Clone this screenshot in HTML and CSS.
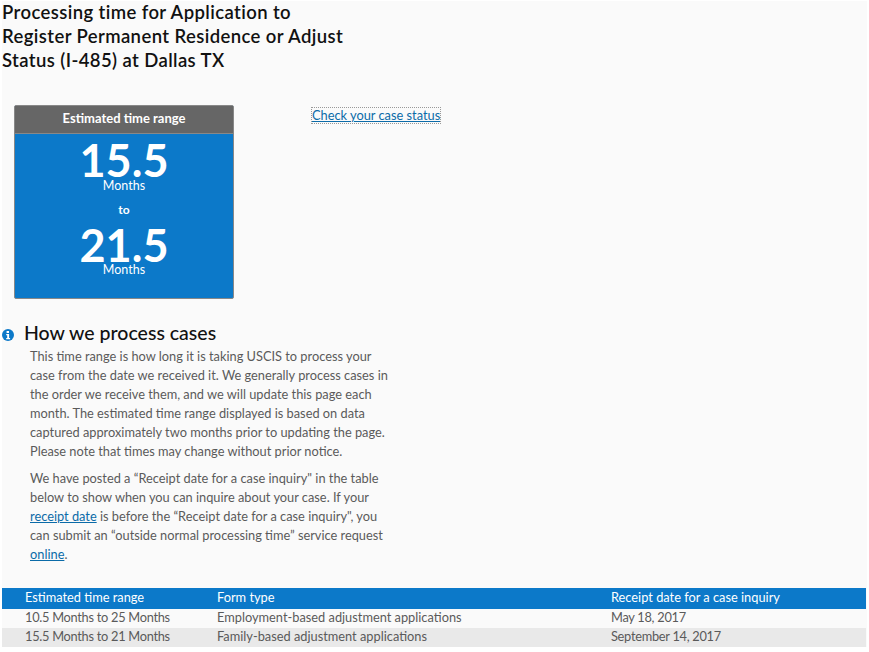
FILE: index.html
```html
<!DOCTYPE html>
<html lang="en">
<head>
    <meta charset="UTF-8">
    <title>Processing time</title>
    <link rel="stylesheet" href="styles.css">
</head>
<body>
    <div class="container">
        <h1>Processing time for Application to<br>Register Permanent Residence or Adjust<br>Status (I-485) at Dallas TX</h1>

        <!-- Time range box and status link -->
        <div class="summary">
            <div class="range-box">
                <div class="range-title">Estimated time range</div>
                <div class="range-body">
                    <div class="range-num">15.5</div>
                    <div class="range-unit">Months</div>
                    <div class="range-to">to</div>
                    <div class="range-num">21.5</div>
                    <div class="range-unit">Months</div>
                </div>
            </div>
            <a class="status-link" href="#">Check your case status</a>
        </div>

        <!-- How we process cases -->
        <div class="info-head">
            <svg class="info-icon" viewBox="0 0 12 12" width="12" height="12">
                <circle cx="6" cy="6" r="6" fill="#0c79c9"/>
                <rect x="4.6" y="2" width="2.4" height="2" fill="#fff"/>
                <path d="M4.2 5h2.9v4h1v1.2H4.2V9h1V6.200H4.200z" fill="#fff"/>
            </svg>
            <h2>How we process cases</h2>
        </div>
        <div class="info-text">
            <p>This time range is how long it is taking USCIS to process your<br>case from the date we received it. We generally process cases in<br>the order we receive them, and we will update this page each<br>month. The estimated time range displayed is based on data<br>captured approximately two months prior to updating the page.<br>Please note that times may change without prior notice.</p>
            <p>We have posted a “Receipt date for a case inquiry" in the table<br>below to show when you can inquire about your case. If your<br><a href="#">receipt date</a> is before the “Receipt date for a case inquiry", you<br>can submit an “outside normal processing time” service request<br><a href="#">online</a>.</p>
        </div>

        <!-- Receipt dates -->
        <table class="times">
            <thead>
                <tr><th>Estimated time range</th><th>Form type</th><th>Receipt date for a case inquiry</th></tr>
            </thead>
            <tbody>
                <tr><td>10.5 Months to 25 Months</td><td>Employment-based adjustment applications</td><td>May 18, 2017</td></tr>
                <tr class="alt"><td>15.5 Months to 21 Months</td><td>Family-based adjustment applications</td><td>September 14, 2017</td></tr>
            </tbody>
        </table>
    </div>
</body>
</html>
```
FILE: styles.css
```css
body {
    font-family: "Lato", "Liberation Sans", sans-serif;
    background-color: #fff;
    margin: 0;
    padding: 0;
    overflow: hidden;
}
.container {
    margin: 1px 2px 0;
    background: #fafafa;
}
h1 {
    font-size: 18.5px;
    font-weight: 600;
    line-height: 24px;
    letter-spacing: 0.4px;
    color: #111;
    margin: 0;
    position: relative;
    top: -1px;
}
.summary {
    display: flex;
    align-items: flex-start;
    margin: 32px 0 0 12px;
}
.range-box {
    width: 218px;
    height: 192px;
    border: 1px solid #888;
    border-radius: 2px;
    background: #0c79c9;
    color: #fff;
    text-align: center;
    flex: none;
}
.range-title {
    background: #666;
    height: 28px;
    line-height: 25px;
    font-size: 13px;
    font-weight: 700;
    border-bottom: 1px solid #888;
    box-sizing: border-box;
}
.range-num {
    font-size: 45px;
    font-weight: 700;
    line-height: 38px;
    margin-top: 7px;
}
.range-to + .range-num {
    margin-top: 9px;
}
.range-unit {
    font-size: 12.5px;
    line-height: 12px;
    margin-top: 1px;
}
.range-unit:last-child {
    margin-top: 0;
}
.range-to {
    font-size: 12px;
    font-weight: 700;
    line-height: 14px;
    margin-top: 11px;
}
.status-link {
    margin: 3px 0 0 78px;
    font-size: 12.8px;
    line-height: 15px;
    color: #0b6ba8;
    outline: 1px dotted #999;
}
.info-head {
    display: flex;
    align-items: center;
    margin-top: 22px;
    height: 24px;
}
.info-icon {
    flex: none;
    margin-top: 4px;
}
h2 {
    font-size: 19.5px;
    font-weight: 500;
    color: #111;
    margin: 0 0 0 10px;
    line-height: 24px;
}
.info-text {
    margin: 2px 0 0 28px;
    width: 380px;
    font-size: 12.8px;
    line-height: 19px;
    color: #5a5a5a;
}
.info-text p {
    margin: 0 0 8px;
}
.info-text a {
    color: #0b6ba8;
}
.times {
    width: 864px;
    border-collapse: collapse;
    table-layout: fixed;
    margin-top: 24px;
    font-size: 12.8px;
    color: #5a5a5a;
}
.times th, .times td {
    text-align: left;
    font-weight: 400;
    padding: 0 0 2px;
    height: 17px;
    line-height: 15px;
}
.times th {
    background: #0c79c9;
    color: #fff;
    height: 19px;
}
.times td:nth-child(1), .times td:nth-child(3) {
    letter-spacing: -0.28px;
}
.times th:nth-child(1), .times td:nth-child(1) {
    width: 215px;
    padding-left: 23px;
    box-sizing: border-box;
}
.times th:nth-child(2), .times td:nth-child(2) {
    width: 394px;
}
.times .alt td {
    background: #e9e9e9;
}
```
